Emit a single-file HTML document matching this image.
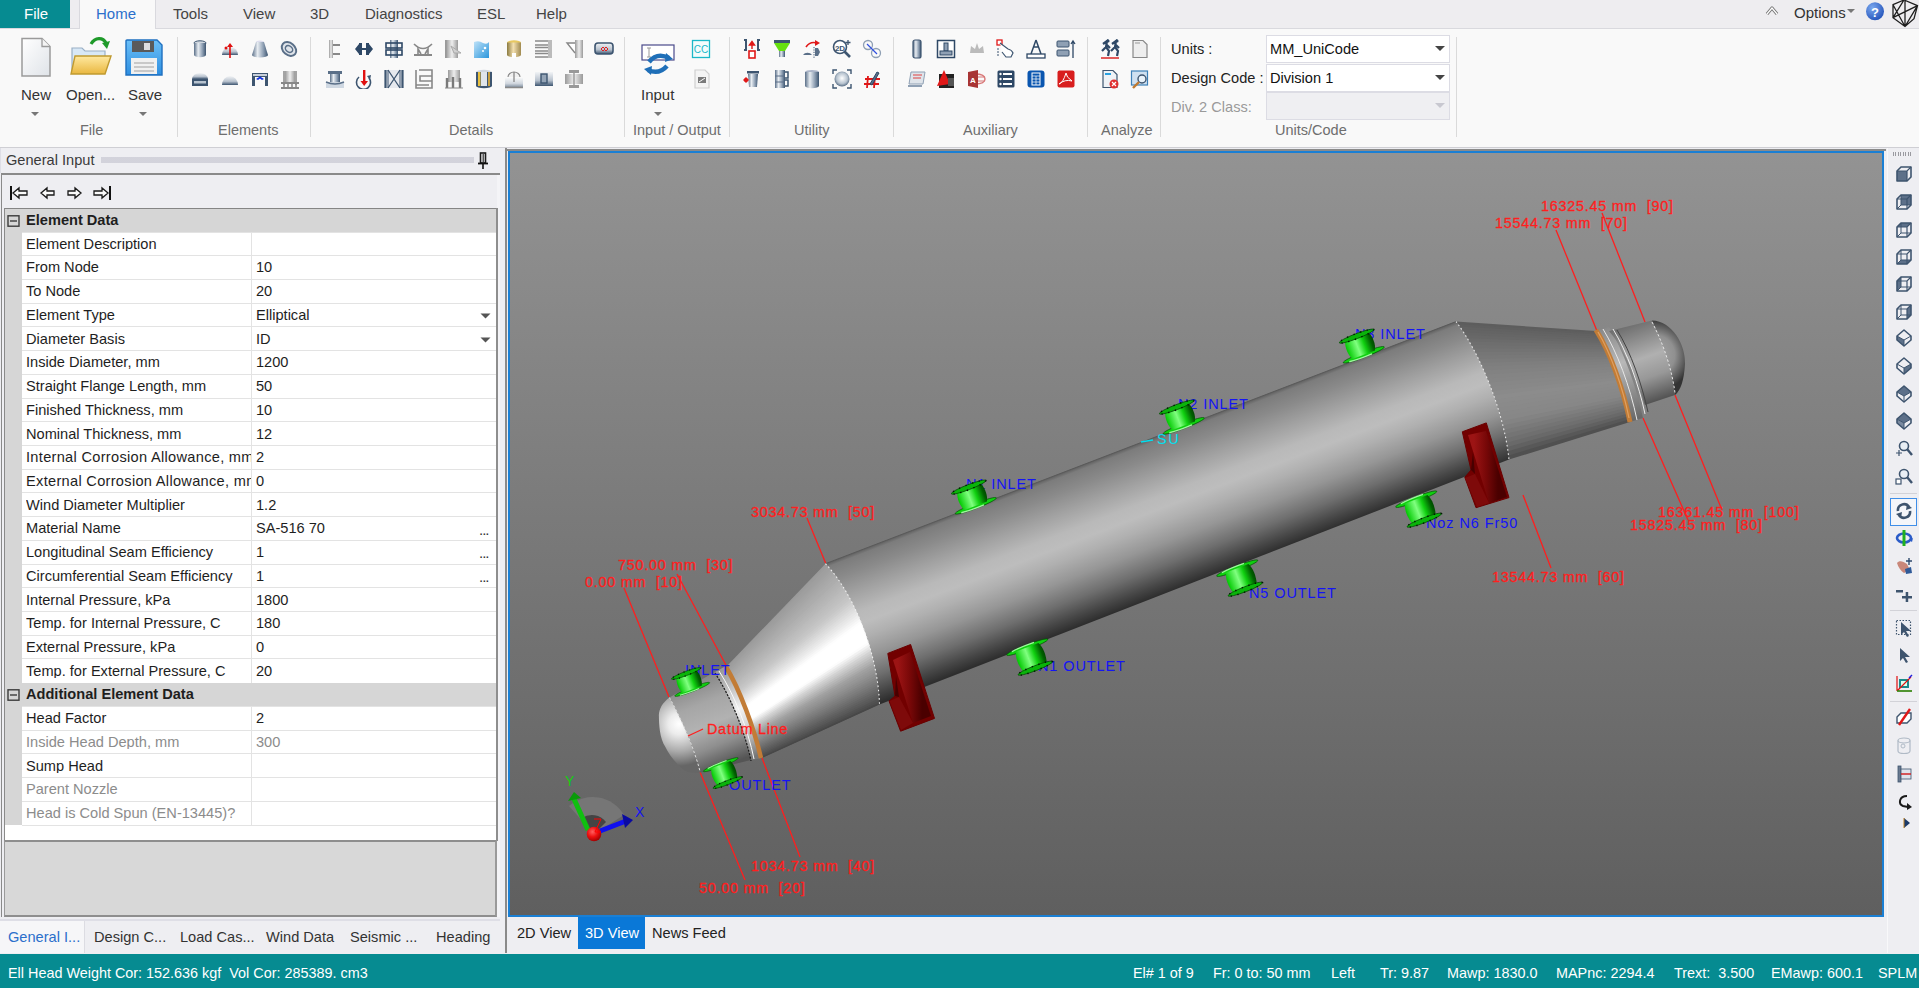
<!DOCTYPE html>
<html><head><meta charset="utf-8">
<style>
*{box-sizing:border-box;margin:0;padding:0}
html,body{width:1919px;height:988px;overflow:hidden;background:#eeeef2;font-family:"Liberation Sans",sans-serif;color:#333;position:relative}
.a{position:absolute}
.t{position:absolute;white-space:nowrap;line-height:1}
.tab{position:absolute;top:6px;font-size:15px;color:#444;line-height:1;white-space:nowrap}
.sep{position:absolute;top:37px;width:1px;height:100px;background:#dadada}
.glab{position:absolute;top:123px;font-size:14.5px;color:#6e6e6e;white-space:nowrap;line-height:1}
.lab{position:absolute;left:26px;width:225px;font-size:14.6px;color:#1e1e1e;white-space:nowrap;line-height:1;overflow:hidden}
.val{position:absolute;left:256px;font-size:14.6px;color:#1e1e1e;white-space:nowrap;line-height:1}
.g{color:#8c8c8c}
.st{position:absolute;top:966.2px;font-size:14.4px;color:#fff;white-space:nowrap;line-height:1}
.ic{position:absolute}

</style></head><body>
<div class="a" style="left:0;top:0;width:1919px;height:28px;background:#eeedf0"></div>
<div class="a" style="left:0;top:28px;width:1919px;height:119px;background:#f9f9f9"></div>
<div class="a" style="left:0;top:28px;width:1919px;height:1px;background:#d9d9de"></div>
<div class="a" style="left:0;top:0;width:70px;height:28px;background:#068b91"></div>
<div class="t" style="left:24px;top:5.5px;font-size:15px;color:#fff">File</div>
<div class="a" style="left:79px;top:0;width:77px;height:29px;background:#f9f9f9;border-left:1px solid #d9d9de;border-right:1px solid #d9d9de"></div>
<div class="tab" style="left:96px;color:#2b6fcb">Home</div>
<div class="tab" style="left:173px;color:#444">Tools</div>
<div class="tab" style="left:243px;color:#444">View</div>
<div class="tab" style="left:310px;color:#444">3D</div>
<div class="tab" style="left:365px;color:#444">Diagnostics</div>
<div class="tab" style="left:477px;color:#444">ESL</div>
<div class="tab" style="left:536px;color:#444">Help</div>
<div class="tab" style="left:1794px;color:#333;top:5px">Options</div>
<svg class="ic" style="left:1847px;top:9px" width="8" height="5"><path d="M0 0H8L4 4Z" fill="#777"/></svg>
<svg class="ic" style="left:1765px;top:5px" width="14" height="12"><path d="M2 9 L7 3 L12 9" fill="none" stroke="#777" stroke-width="3.2" stroke-linejoin="round"/><path d="M2 9 L7 3 L12 9" fill="none" stroke="#fff" stroke-width="1.2"/></svg>
<svg class="ic" style="left:1865px;top:1px" width="20" height="21"><defs><radialGradient id="hg" cx="0.35" cy="0.3" r="0.8"><stop offset="0" stop-color="#7aa7ee"/><stop offset="1" stop-color="#1f4fb8"/></radialGradient></defs><circle cx="10" cy="10.3" r="9" fill="url(#hg)"/><text x="10" y="15.5" font-size="13" font-weight="bold" text-anchor="middle" fill="#fff" font-family="Liberation Sans">?</text></svg>
<svg class="ic" style="left:1890px;top:0px" width="29" height="28" viewBox="1890 0 29 28"><path d="M1893 4.7 L1904 0 L1917.5 5.6 L1914 18.7 L1905 26.5 L1893 17.7 Z M1893 4.7 L1905 26.5 M1904 0 L1893 17.7 M1917.5 5.6 L1905 26.5 M1893 17.7 L1917.5 5.6 M1905 0 L1905 26" fill="none" stroke="#1e1e1e" stroke-width="1.3"/></svg>
<div class="sep" style="left:177px"></div>
<div class="sep" style="left:310px"></div>
<div class="sep" style="left:624px"></div>
<div class="sep" style="left:729px"></div>
<div class="sep" style="left:893px"></div>
<div class="sep" style="left:1087px"></div>
<div class="sep" style="left:1160px"></div>
<div class="sep" style="left:1456px"></div>
<div class="glab" style="left:80px">File</div>
<div class="glab" style="left:218px">Elements</div>
<div class="glab" style="left:449px">Details</div>
<div class="glab" style="left:633px">Input / Output</div>
<div class="glab" style="left:794px">Utility</div>
<div class="glab" style="left:963px">Auxiliary</div>
<div class="glab" style="left:1101px">Analyze</div>
<div class="glab" style="left:1275px">Units/Code</div>
<div class="t" style="left:21px;top:86.5px;font-size:15px;color:#333">New</div>
<div class="t" style="left:66px;top:86.5px;font-size:15px;color:#333">Open...</div>
<div class="t" style="left:128px;top:86.5px;font-size:15px;color:#333">Save</div>
<div class="t" style="left:641px;top:86.5px;font-size:15px;color:#333">Input</div>
<svg class="ic" style="left:31px;top:112px" width="8" height="5"><path d="M0 0H8L4 4Z" fill="#777"/></svg>
<svg class="ic" style="left:139px;top:112px" width="8" height="5"><path d="M0 0H8L4 4Z" fill="#777"/></svg>
<svg class="ic" style="left:654px;top:112px" width="8" height="5"><path d="M0 0H8L4 4Z" fill="#777"/></svg>
<div class="t" style="left:1171px;top:42px;font-size:14.6px;color:#222">Units :</div>
<div class="t" style="left:1171px;top:71px;font-size:14.6px;color:#222">Design Code :</div>
<div class="t" style="left:1171px;top:100px;font-size:14.6px;color:#9a9a9a">Div. 2 Class:</div>
<div class="a" style="left:1266px;top:35px;width:184px;height:28px;background:#fff;border:1px solid #dcdce4"></div>
<div class="t" style="left:1270px;top:42px;font-size:14.6px;color:#111">MM_UniCode</div>
<svg class="ic" style="left:1435px;top:46px" width="10" height="6"><path d="M0 0H10L5 5Z" fill="#444"/></svg>
<div class="a" style="left:1266px;top:64px;width:184px;height:28px;background:#fff;border:1px solid #dcdce4"></div>
<div class="t" style="left:1270px;top:71px;font-size:14.6px;color:#111">Division 1</div>
<svg class="ic" style="left:1435px;top:75px" width="10" height="6"><path d="M0 0H10L5 5Z" fill="#444"/></svg>
<div class="a" style="left:1266px;top:92px;width:184px;height:28px;background:#efeff2;border:1px solid #dcdce4"></div>
<svg class="ic" style="left:1435px;top:103px" width="10" height="6"><path d="M0 0H10L5 5Z" fill="#c8c8d0"/></svg>
<div class="a" style="left:0;top:147px;width:1919px;height:1px;background:#cfcfd4"></div>
<div class="a" style="left:500px;top:148px;width:6px;height:805px;background:#eeeef2"></div>
<div class="a" style="left:505px;top:148px;width:2px;height:805px;background:#8a8a8a"></div>
<div class="a" style="left:507px;top:149px;width:1379px;height:2px;background:#8a8a8a"></div>
<div class="a" style="left:508px;top:151px;width:1376px;height:766px;border:2px solid #1a7fd4"></div>
<div class="a" style="left:0;top:953.6px;width:1919px;height:35px;background:#068b91"></div>
<div class="st" style="left:8px">Ell Head Weight Cor: 152.636 kgf&nbsp; Vol Cor: 285389. cm3</div>
<div class="st" style="left:1133px">El# 1 of 9</div>
<div class="st" style="left:1213px">Fr: 0 to: 50 mm</div>
<div class="st" style="left:1331px">Left</div>
<div class="st" style="left:1380px">Tr: 9.87</div>
<div class="st" style="left:1447px">Mawp: 1830.0</div>
<div class="st" style="left:1556px">MAPnc: 2294.4</div>
<div class="st" style="left:1674px">Trext:&nbsp; 3.500</div>
<div class="st" style="left:1771px">EMawp: 600.1</div>
<div class="st" style="left:1878px">SPLM</div>
<div class="a" style="left:507px;top:917px;width:1379px;height:36px;background:#eeeef2"></div>
<div class="a" style="left:578px;top:917px;width:67px;height:32px;background:#0a78d7"></div>
<div class="t" style="left:517px;top:925.5px;font-size:14.6px;color:#222">2D View</div>
<div class="t" style="left:585px;top:925.5px;font-size:14.6px;color:#fff">3D View</div>
<div class="t" style="left:652px;top:925.5px;font-size:14.6px;color:#222">News Feed</div>
<div class="a" style="left:1886px;top:148px;width:33px;height:805px;background:#eeeef2"></div><svg class="ic" style="left:0;top:0" width="0" height="0"><defs><linearGradient id="mt" x1="0" x2="1"><stop offset="0" stop-color="#5a6f88"/><stop offset="0.35" stop-color="#e8edf2"/><stop offset="0.7" stop-color="#8fa0b4"/><stop offset="1" stop-color="#3d5570"/></linearGradient><linearGradient id="mv" x1="0" y1="0" x2="0" y2="1"><stop offset="0" stop-color="#f2f4f6"/><stop offset="0.6" stop-color="#b8c2ce"/><stop offset="1" stop-color="#3d5570"/></linearGradient><linearGradient id="gy" x1="0" x2="1"><stop offset="0" stop-color="#9a9a9a"/><stop offset="0.5" stop-color="#eeeeee"/><stop offset="1" stop-color="#9a9a9a"/></linearGradient><linearGradient id="gld" x1="0" x2="1"><stop offset="0" stop-color="#8a7a40"/><stop offset="0.45" stop-color="#f4e0b0"/><stop offset="1" stop-color="#a08a50"/></linearGradient><linearGradient id="wat" x1="0" y1="0" x2="1" y2="1"><stop offset="0" stop-color="#bfe2f8"/><stop offset="1" stop-color="#2a96dc"/></linearGradient><linearGradient id="fold" x1="0" y1="0" x2="0" y2="1"><stop offset="0" stop-color="#ffe9a0"/><stop offset="1" stop-color="#e9b740"/></linearGradient><linearGradient id="page" x1="0" y1="0" x2="1" y2="1"><stop offset="0" stop-color="#ffffff"/><stop offset="1" stop-color="#dfe3e8"/></linearGradient><linearGradient id="flp" x1="0" y1="0" x2="0" y2="1"><stop offset="0" stop-color="#6cc0f8"/><stop offset="1" stop-color="#2d8ee0"/></linearGradient><radialGradient id="sph" cx="0.5" cy="0.45" r="0.6"><stop offset="0" stop-color="#ffffff"/><stop offset="0.6" stop-color="#b8c4d0"/><stop offset="1" stop-color="#3d5570"/></radialGradient></defs></svg>
<svg class="ic" style="left:19px;top:37px" width="34" height="41" viewBox="0 0 34 41"><path d="M3 1.5 L23 1.5 L31 9.5 L31 39 L3 39 Z" fill="url(#page)" stroke="#9a9a9a" stroke-width="1.5"/><path d="M23 1.5 L23 9.5 L31 9.5" fill="#f4f4f4" stroke="#9a9a9a" stroke-width="1.3"/></svg>
<svg class="ic" style="left:69px;top:36px" width="44" height="41" viewBox="0 0 44 41"><path d="M3 12 L13 12 L16 15 L36 15 L36 36 L3 36 Z" fill="#d8e8f6" stroke="#9ab0c6" stroke-width="1.2"/><path d="M6 20 L42 20 L36 38 L2 38 Z" fill="url(#fold)" stroke="#c09a30" stroke-width="1.4"/><path d="M22 8 C26 1 34 1 37 7" fill="none" stroke="#1f9a2a" stroke-width="3.2"/><path d="M33 7 L41 5 L38 13 Z" fill="#1f9a2a"/></svg>
<svg class="ic" style="left:124px;top:38px" width="40" height="40" viewBox="0 0 40 40"><path d="M2 3 Q2 2 3 2 L33 2 L38 7 L38 37 L2 37 Z" fill="url(#flp)" stroke="#1f70c0" stroke-width="1.4"/><rect x="8" y="3" width="22" height="11" fill="#5a5a5a"/><rect x="20" y="5" width="6" height="7" fill="#ddd"/><rect x="7" y="20" width="26" height="16" fill="#f0f0f0"/><path d="M10 25 H30 M10 29 H30 M10 33 H30" stroke="#bbb" stroke-width="1.4"/></svg>
<svg class="ic" style="left:189.5px;top:39.0px" width="20" height="20" viewBox="0 0 20 20"><ellipse cx="10" cy="4" rx="6" ry="2.2" fill="#cfd6de" stroke="#3d5570"/><path d="M4 4 V16 A6 2.2 0 0 0 16 16 V4" fill="url(#mt)"/></svg>
<svg class="ic" style="left:219.5px;top:41.0px" width="20" height="20" viewBox="0 0 20 20"><path d="M2 14 A8 8 0 0 1 18 14 Z" fill="url(#mv)"/><path d="M10 17 V4" stroke="#e01010" stroke-width="1.6"/><path d="M7 6 L10 2 L13 6 Z" fill="#e01010"/><circle cx="6" cy="7" r="1.5" fill="#e01010"/></svg>
<svg class="ic" style="left:249.5px;top:39.0px" width="20" height="20" viewBox="0 0 20 20"><ellipse cx="10" cy="3" rx="4" ry="1.6" fill="#dde"/><path d="M6 3 L2 16 A8 2.5 0 0 0 18 16 L14 3 Z" fill="url(#mt)"/></svg>
<svg class="ic" style="left:279.0px;top:39.0px" width="20" height="20" viewBox="0 0 20 20"><ellipse cx="10" cy="10" rx="8" ry="6" transform="rotate(40 10 10)" fill="#dfe4ea" stroke="#5a6f88" stroke-width="2"/><ellipse cx="10" cy="10" rx="4" ry="3" transform="rotate(40 10 10)" fill="none" stroke="#5a6f88" stroke-width="1.5"/></svg>
<svg class="ic" style="left:189.5px;top:70.0px" width="20" height="20" viewBox="0 0 20 20"><path d="M2 9 A8 6 0 0 1 18 9 Z" fill="url(#mv)"/><rect x="2" y="9" width="16" height="7" fill="#3d5570"/><rect x="4" y="11" width="12" height="2.5" fill="#b8c4d0"/></svg>
<svg class="ic" style="left:219.5px;top:70.0px" width="20" height="20" viewBox="0 0 20 20"><path d="M2 15 A8 9 0 0 1 18 15 Z" fill="url(#mv)"/></svg>
<svg class="ic" style="left:249.5px;top:70.0px" width="20" height="20" viewBox="0 0 20 20"><path d="M2 3 H18 V16 H15 V7 H5 V16 H2 Z" fill="#3d5570"/><rect x="3" y="4" width="14" height="2" fill="#c8d0da"/><path d="M6 9 L10 6.5 L14 9 L12 10 L10 8.5 L8 10Z" fill="#1030e0"/></svg>
<svg class="ic" style="left:279.5px;top:70.0px" width="20" height="20" viewBox="0 0 20 20"><rect x="5" y="1" width="10" height="12" fill="url(#gy)"/><path d="M4 1 V15 M16 1 V15" stroke="#888" stroke-width="1.5"/><rect x="1" y="12" width="18" height="2" fill="#888"/><rect x="1" y="17" width="18" height="2" fill="#888"/><path d="M4 14 V17 M8 14 V17 M12 14 V17 M16 14 V17" stroke="#888" stroke-width="1.5"/></svg>
<svg class="ic" style="left:325.0px;top:39.0px" width="20" height="20" viewBox="0 0 20 20"><rect x="4" y="1" width="4" height="18" fill="url(#gy)"/><rect x="8" y="5" width="7" height="2" fill="#888"/><rect x="8" y="14" width="7" height="2" fill="#888"/></svg>
<svg class="ic" style="left:354.0px;top:39.0px" width="20" height="20" viewBox="0 0 20 20"><path d="M1 10 L5 5 V15 Z M19 10 L15 5 V15 Z" fill="#2e4866"/><rect x="5" y="4" width="3" height="12" fill="#2e4866"/><rect x="12" y="4" width="3" height="12" fill="#2e4866"/><rect x="8" y="9" width="4" height="2" fill="#2e4866"/></svg>
<svg class="ic" style="left:384.0px;top:39.0px" width="20" height="20" viewBox="0 0 20 20"><rect x="6" y="1" width="8" height="18" fill="url(#mt)"/><rect x="2" y="4" width="16" height="5" fill="none" stroke="#2e4866" stroke-width="1.6"/><rect x="2" y="11" width="16" height="5" fill="none" stroke="#2e4866" stroke-width="1.6"/></svg>
<svg class="ic" style="left:413.0px;top:39.0px" width="20" height="20" viewBox="0 0 20 20"><path d="M1 5 Q10 14 19 5" fill="none" stroke="#888" stroke-width="1.6"/><rect x="1" y="15" width="18" height="2" fill="#888"/><path d="M5 15 L5 10 L8 15 M15 15 L15 10 L12 15" fill="none" stroke="#888" stroke-width="1.6"/></svg>
<svg class="ic" style="left:443.0px;top:39.0px" width="20" height="20" viewBox="0 0 20 20"><rect x="3" y="1" width="12" height="18" fill="url(#gy)"/><rect x="2" y="1" width="1.5" height="18" fill="#999"/><path d="M8 7 L15 12 L18 14 L11 14 Z" fill="#d0d0d0" stroke="#aaa"/></svg>
<svg class="ic" style="left:473.0px;top:39.0px" width="20" height="20" viewBox="0 0 20 20"><path d="M1 3 Q6 1 10 4 Q14 6 16 3 V19 H1 Z" fill="url(#wat)"/><circle cx="12" cy="9" r="1.3" fill="#fff"/><circle cx="10" cy="12" r="1" fill="#fff"/></svg>
<svg class="ic" style="left:503.5px;top:39.0px" width="20" height="20" viewBox="0 0 20 20"><ellipse cx="10" cy="3.5" rx="7" ry="2.2" fill="#e8c860"/><path d="M3 3.5 V16 A7 2.2 0 0 0 17 16 V3.5" fill="url(#gld)"/><rect x="8" y="14" width="4" height="5" fill="#fff"/></svg>
<svg class="ic" style="left:533.5px;top:39.0px" width="20" height="20" viewBox="0 0 20 20"><path d="M1 2 H18 M1 6 H18 M1 8.5 H18 M1 12 H18 M1 14.5 H18 M1 18 H18" stroke="#8a8a8a" stroke-width="1.6"/><rect x="14" y="1" width="4" height="18" fill="#bbb"/></svg>
<svg class="ic" style="left:564.5px;top:39.0px" width="20" height="20" viewBox="0 0 20 20"><rect x="10" y="1" width="8" height="18" fill="url(#gy)"/><path d="M10 4 L2 4 L10 14" fill="#fff" stroke="#888" stroke-width="1.4"/></svg>
<svg class="ic" style="left:593.5px;top:39.0px" width="20" height="20" viewBox="0 0 20 20"><rect x="1" y="4" width="18" height="11" rx="3" fill="url(#mv)" stroke="#3d5570" stroke-width="1.6"/><path d="M7 10 L9 8 L11 10 L9 12Z M10 10 L12 8 L14 10 L12 12Z" fill="none" stroke="#e02020" stroke-width="1"/></svg>
<svg class="ic" style="left:325.0px;top:69.0px" width="20" height="20" viewBox="0 0 20 20"><rect x="1" y="13" width="18" height="6" fill="#cfd8e2"/><path d="M5 13 V4 H15 V13" fill="url(#mt)"/><rect x="3" y="2" width="14" height="3" fill="#5a6f88"/><path d="M1 13 Q10 17 19 13" fill="none" stroke="#5a6f88" stroke-width="1.5"/></svg>
<svg class="ic" style="left:354.0px;top:69.0px" width="20" height="20" viewBox="0 0 20 20"><path d="M5 8 A7 7 0 1 0 15 9" fill="none" stroke="#3d5570" stroke-width="1.6"/><path d="M13 7 L17 6 L16 11 Z" fill="#3d5570"/><rect x="9" y="1" width="2.4" height="12" fill="#e01010"/><path d="M6.5 12 L10.2 17 L14 12Z" fill="#e01010"/></svg>
<svg class="ic" style="left:384.0px;top:69.0px" width="20" height="20" viewBox="0 0 20 20"><rect x="1" y="1" width="18" height="18" fill="#e6e9ee"/><path d="M1.5 1 V19 M18.5 1 V19" stroke="#3d5570" stroke-width="2.2"/><path d="M4 1 V19 M16 1 V19" stroke="#3d5570" stroke-width="1"/><path d="M4 1 L16 19 M16 1 L4 19" stroke="#3d5570" stroke-width="1.3"/></svg>
<svg class="ic" style="left:414.0px;top:69.0px" width="20" height="20" viewBox="0 0 20 20"><path d="M2 1 V19 H18 V1 H5 M18 7 H6 V12 H18 M2 16 H15" fill="none" stroke="#888" stroke-width="1.6"/></svg>
<svg class="ic" style="left:443.5px;top:69.0px" width="20" height="20" viewBox="0 0 20 20"><rect x="4" y="1" width="12" height="12" fill="url(#gy)"/><path d="M3 19 V9 M9 19 V8 M16 19 V9" stroke="#7a7a7a" stroke-width="2.4"/><path d="M1 19 H19" stroke="#888" stroke-width="1"/></svg>
<svg class="ic" style="left:474.0px;top:69.0px" width="20" height="20" viewBox="0 0 20 20"><ellipse cx="10" cy="3" rx="8" ry="2.2" fill="#cfd6de"/><path d="M2 3 V17 A8 2.2 0 0 0 18 17 V3" fill="#3d5570"/><rect x="4" y="3" width="2.5" height="14" fill="#e8c040"/><rect x="7" y="3" width="6" height="14" fill="#dfe4ea"/><rect x="14" y="3" width="2" height="14" fill="#c8a040"/></svg>
<svg class="ic" style="left:504.0px;top:69.0px" width="20" height="20" viewBox="0 0 20 20"><path d="M4 8 A6 5 0 0 1 16 8" fill="#f0f0f0" stroke="#888" stroke-width="1.1"/><rect x="1" y="9" width="18" height="9" fill="url(#mv)" opacity="0.6"/><path d="M10 3 V13 M1 18.5 H19" stroke="#888" stroke-width="1.3"/></svg>
<svg class="ic" style="left:534.0px;top:69.0px" width="20" height="20" viewBox="0 0 20 20"><rect x="1" y="3" width="18" height="14" fill="url(#mv)"/><rect x="7" y="5" width="6" height="9" fill="#94a4b6" stroke="#3d5570" stroke-width="1.4"/></svg>
<svg class="ic" style="left:563.5px;top:69.0px" width="20" height="20" viewBox="0 0 20 20"><rect x="5" y="1" width="10" height="3" fill="#999"/><rect x="1" y="5" width="18" height="10" fill="url(#gy)"/><rect x="5" y="16" width="10" height="3" fill="#999"/><path d="M10 4 V16" stroke="#888" stroke-width="1.2"/></svg>
<svg class="ic" style="left:639px;top:42px" width="38" height="36" viewBox="0 0 38 36"><rect x="3" y="3" width="32" height="15" fill="#fff" stroke="#4a4a8a" stroke-width="1.2"/><path d="M8 6 H12 M10 6 V15 M8 15 H12" stroke="#999" stroke-width="1"/><path d="M10 20 Q18 10 30 16" fill="none" stroke="#1f6fb8" stroke-width="4.5"/><path d="M27 11 L34 17 L26 20Z" fill="#1f6fb8"/><path d="M28 24 Q20 33 9 28" fill="none" stroke="#1f6fb8" stroke-width="4.5"/><path d="M12 33 L5 27 L13 24Z" fill="#1f6fb8"/></svg>
<svg class="ic" style="left:691.0px;top:39.0px" width="20" height="20" viewBox="0 0 20 20"><rect x="1.5" y="1.5" width="17" height="17" fill="#f4fcfc" stroke="#1ab8c8" stroke-width="1.3"/><text x="10" y="14" font-size="10" text-anchor="middle" fill="#1ab8c8" font-family="Liberation Sans">CC</text></svg>
<svg class="ic" style="left:691.5px;top:69.0px" width="20" height="20" viewBox="0 0 20 20"><path d="M3 1 H13 L17 5 V19 H3 Z" fill="#f4f4f4" stroke="#cfcfcf" stroke-width="1.2"/><rect x="6" y="8" width="8" height="6" fill="#7a7a7a"/><path d="M7 13 L13 9" stroke="#fff" stroke-width="1"/></svg>
<svg class="ic" style="left:742.0px;top:39.0px" width="20" height="20" viewBox="0 0 20 20"><path d="M2 1 H4 V11 H2 M18 1 H16 V11 H18" stroke="#3d5570" stroke-width="2" fill="none"/><rect x="7" y="12" width="6" height="7" fill="#fff" stroke="#e01818" stroke-width="1.6"/><path d="M10 10 V4 M7.5 6 L10 2.5 L12.5 6Z" stroke="#e01818" fill="#e01818" stroke-width="1.4"/></svg>
<svg class="ic" style="left:772.0px;top:39.0px" width="20" height="20" viewBox="0 0 20 20"><rect x="2" y="1" width="16" height="3" fill="#3d5570"/><path d="M2 4 H18 L13 12 H7 Z" fill="#66e010"/><rect x="7" y="12" width="6" height="6" fill="url(#mt)"/></svg>
<svg class="ic" style="left:802.0px;top:39.0px" width="20" height="20" viewBox="0 0 20 20"><path d="M4 8 Q8 2 15 4" fill="none" stroke="#e01818" stroke-width="1.6"/><path d="M13 1 L18 4 L13 7Z" fill="#e01818"/><path d="M1 16 A5 4 0 0 1 10 16Z" fill="#5a6f88"/><path d="M12 8 V19" stroke="#3d5570" stroke-dasharray="1.2 1.2"/><path d="M13 9 H16 L18 13 L16 17 H13Z" fill="#5a6f88"/></svg>
<svg class="ic" style="left:832.0px;top:39.0px" width="20" height="20" viewBox="0 0 20 20"><circle cx="8" cy="8" r="6.5" fill="#fff" stroke="#3d5570" stroke-width="1.6"/><text x="8" y="11.5" font-size="8" text-anchor="middle" fill="#3d5570" font-weight="bold" font-family="Liberation Sans">2D</text><path d="M12.5 12.5 L18 18" stroke="#3d5570" stroke-width="2.6"/><path d="M16 1 V6 M13.5 3.5 H18.5" stroke="#3d5570" stroke-width="1.3"/></svg>
<svg class="ic" style="left:862.0px;top:39.0px" width="20" height="20" viewBox="0 0 20 20"><circle cx="6" cy="6" r="4.5" fill="none" stroke="#8fa0b4" stroke-width="1.3"/><circle cx="14" cy="14" r="4.5" fill="none" stroke="#8fa0b4" stroke-width="1.3"/><path d="M5 5 L15 15" stroke="#3050e0" stroke-width="1.3"/></svg>
<svg class="ic" style="left:742.0px;top:69.0px" width="20" height="20" viewBox="0 0 20 20"><rect x="5" y="2" width="12" height="2.5" fill="#3d5570"/><path d="M6 5 H16 L15 18 H7Z" fill="url(#mt)"/><circle cx="4" cy="11" r="2.2" fill="#e01818"/><path d="M1 11 H7 M4 8 V14" stroke="#e01818" stroke-width="0.9"/></svg>
<svg class="ic" style="left:772.0px;top:69.0px" width="20" height="20" viewBox="0 0 20 20"><rect x="3" y="1" width="10" height="18" fill="url(#mt)"/><path d="M13 3 H16 V9 H13 M13 11 H16 V17 H13" fill="none" stroke="#3d5570" stroke-width="1.5"/><path d="M3 7 H13 M3 13 H13" stroke="#5a6f88"/></svg>
<svg class="ic" style="left:802.0px;top:69.0px" width="20" height="20" viewBox="0 0 20 20"><ellipse cx="10" cy="3" rx="7" ry="2" fill="#aab4c8"/><path d="M3 3 V17 A7 2.2 0 0 0 17 17 V3" fill="url(#mt)"/></svg>
<svg class="ic" style="left:832.0px;top:69.0px" width="20" height="20" viewBox="0 0 20 20"><circle cx="10" cy="10" r="7.5" fill="url(#sph)"/><path d="M1 5 V1 H5 M15 1 H19 V5 M19 15 V19 H15 M5 19 H1 V15" fill="none" stroke="#3d5570" stroke-width="1.4"/></svg>
<svg class="ic" style="left:862.0px;top:69.0px" width="20" height="20" viewBox="0 0 20 20"><path d="M3 10 H18 M2 15 H17 M6 7 L5 19 M13 7 L12 19" stroke="#e01818" stroke-width="1.8"/><path d="M8 15 L15 3 L17 4 L10 16 Z" fill="#5a6f88" stroke="#2e4866"/></svg>
<svg class="ic" style="left:907.0px;top:39.0px" width="20" height="20" viewBox="0 0 20 20"><rect x="6" y="1" width="8" height="18" rx="2" fill="url(#mt)" stroke="#3d5570" stroke-width="1.2"/></svg>
<svg class="ic" style="left:936.0px;top:39.0px" width="20" height="20" viewBox="0 0 20 20"><rect x="1.5" y="1.5" width="17" height="17" fill="#fff" stroke="#2e4866" stroke-width="1.5"/><rect x="8" y="4" width="4" height="8" fill="#8fa0b4" stroke="#2e4866"/><rect x="4" y="12" width="12" height="4" fill="#8fa0b4" stroke="#2e4866"/></svg>
<svg class="ic" style="left:966.5px;top:39.0px" width="20" height="20" viewBox="0 0 20 20"><path d="M3 14 L4 7 L8 10 L10 4 L12 10 L16 7 L17 14 Z" fill="#bbb"/></svg>
<svg class="ic" style="left:995.5px;top:39.0px" width="20" height="20" viewBox="0 0 20 20"><rect x="1" y="1" width="5" height="5" fill="#fff" stroke="#e01818" stroke-width="1.3"/><path d="M4 4 L12 10 Q16 11 17 14 L15 18 H10 L6 13" fill="#fff" stroke="#3d5570" stroke-width="1.2"/><path d="M1 10 H3 M1 13 H3 M1 16 H3" stroke="#3d5570"/></svg>
<svg class="ic" style="left:1026.0px;top:39.0px" width="20" height="20" viewBox="0 0 20 20"><path d="M10 1 L5 15 M10 1 L15 15 M7 8 H13" stroke="#2e4866" stroke-width="1.5" fill="none"/><rect x="1" y="15" width="18" height="4" fill="#fff" stroke="#2e4866" stroke-width="1.3"/></svg>
<svg class="ic" style="left:1056.0px;top:39.0px" width="20" height="20" viewBox="0 0 20 20"><rect x="1" y="2" width="12" height="6" rx="1" fill="#8fa0b4" stroke="#3d5570"/><rect x="1" y="11" width="12" height="6" rx="1" fill="#8fa0b4" stroke="#3d5570"/><path d="M17 19 V3 M15 5 L17 2 L19 5" stroke="#2e4866" stroke-width="1.3" fill="none"/></svg>
<svg class="ic" style="left:907.0px;top:69.0px" width="20" height="20" viewBox="0 0 20 20"><path d="M4 3 H18 L16 15 H2 Z" fill="#dfe4ea" stroke="#8fa0b4"/><path d="M6 6 H15 M6 9 H14" stroke="#e04040" stroke-width="1.2"/><path d="M1 17 H15" stroke="#8fa0b4" stroke-width="2"/></svg>
<svg class="ic" style="left:936.0px;top:69.0px" width="20" height="20" viewBox="0 0 20 20"><rect x="3" y="5" width="15" height="14" fill="#222"/><path d="M1 17 L8 1 L14 15Z" fill="#e01818"/><rect x="12" y="9" width="6" height="8" fill="#555"/></svg>
<svg class="ic" style="left:966.5px;top:69.0px" width="20" height="20" viewBox="0 0 20 20"><path d="M8 5 Q18 5 18 10 Q18 15 8 15" fill="none" stroke="#d87878" stroke-width="1.4"/><path d="M8 8 H18 M8 12 H18" stroke="#d87878" stroke-width="1.1"/><path d="M1 3 L11 1 V19 L1 17 Z" fill="#a83434"/><text x="6" y="14" font-size="8" text-anchor="middle" fill="#fff" font-weight="bold" font-family="Liberation Sans">A</text></svg>
<svg class="ic" style="left:995.5px;top:69.0px" width="20" height="20" viewBox="0 0 20 20"><rect x="1.5" y="1.5" width="17" height="17" rx="1.5" fill="#2e4866"/><path d="M7 5 H16 M7 10 H16 M7 15 H16" stroke="#fff" stroke-width="1.8"/><circle cx="4.5" cy="5" r="1.2" fill="#fff"/><circle cx="4.5" cy="10" r="1.2" fill="#fff"/><circle cx="4.5" cy="15" r="1.2" fill="#fff"/></svg>
<svg class="ic" style="left:1026.0px;top:69.0px" width="20" height="20" viewBox="0 0 20 20"><rect x="1.5" y="1.5" width="17" height="17" rx="3" fill="#0a56b0"/><rect x="6" y="4" width="8" height="12" fill="none" stroke="#fff" stroke-width="1"/><path d="M6 7 H14 M6 10 H14 M6 13 H14 M10 7 V16" stroke="#fff" stroke-width="0.7"/></svg>
<svg class="ic" style="left:1056.0px;top:69.0px" width="20" height="20" viewBox="0 0 20 20"><rect x="1.5" y="1.5" width="17" height="17" rx="2" fill="#d81e1e"/><path d="M10 4 Q7 14 3 15 Q9 10 16 12 Q10 8 10 4Z" fill="none" stroke="#fff" stroke-width="1"/></svg>
<svg class="ic" style="left:1100.0px;top:39.0px" width="20" height="20" viewBox="0 0 20 20"><path d="M3 5 L7 2 L6 8 L9 12 L8 17 M6 8 L2 12 M7 6 L10 9 M12 5 L16 2 L15 8 L18 12 L17 17 M15 8 L11 12 M16 6 L19 9" fill="none" stroke="#2e4866" stroke-width="2.2"/><circle cx="8" cy="2" r="1.6" fill="#2e4866"/><circle cx="17" cy="2" r="1.6" fill="#2e4866"/><path d="M1 19 H19" stroke="#d81818" stroke-width="1.4"/></svg>
<svg class="ic" style="left:1130.0px;top:39.0px" width="20" height="20" viewBox="0 0 20 20"><path d="M3 1.5 H13 L17 5.5 V18.5 H3 Z" fill="#eee" stroke="#888" stroke-width="1.2"/><path d="M5 4 H10" stroke="#999"/></svg>
<svg class="ic" style="left:1100.0px;top:69.0px" width="20" height="20" viewBox="0 0 20 20"><path d="M3 1.5 H13 L17 5.5 V18.5 H3 Z" fill="#eef2f6" stroke="#3d5570" stroke-width="1.2"/><rect x="5" y="4" width="6" height="2" fill="#2aa0e0"/><circle cx="14" cy="15" r="4.5" fill="#e03030"/><path d="M12 13 L16 17 M16 13 L12 17" stroke="#fff" stroke-width="1.2"/></svg>
<svg class="ic" style="left:1130.0px;top:69.0px" width="20" height="20" viewBox="0 0 20 20"><rect x="1.5" y="2" width="16" height="14" fill="#cfe0f0" stroke="#3d80b8" stroke-width="1.2"/><circle cx="12" cy="10" r="4" fill="#e8f2fa" stroke="#3d5570" stroke-width="1.4"/><path d="M9 13 L3 19" stroke="#c07a30" stroke-width="2.4"/></svg><div class="a" style="left:0;top:148px;width:500px;height:25px;background:#eeeef2;border-left:1px solid #dedee6"></div>
<div class="t" style="left:6px;top:152.5px;font-size:14.6px;color:#3a3a3a">General Input</div>
<div class="a" style="left:101px;top:157px;width:373px;height:6px;background-image:radial-gradient(circle at 1px 1px,#d2d2da 0.7px,transparent 0.9px);background-size:2px 2px"></div>
<svg class="ic" style="left:476px;top:152px" width="14" height="18" viewBox="0 0 14 18"><rect x="4.5" y="1" width="5" height="10" fill="none" stroke="#1a1a1a" stroke-width="1.6"/><rect x="6.5" y="2" width="1.5" height="8" fill="#555"/><line x1="2" y1="11.5" x2="12" y2="11.5" stroke="#111" stroke-width="1.8"/><line x1="7" y1="12" x2="7" y2="17" stroke="#111" stroke-width="1.6"/></svg>
<div class="a" style="left:1px;top:173px;width:499px;height:2px;background:#8a8a8a"></div>
<div class="a" style="left:1px;top:173px;width:1px;height:744px;background:#8a8a8a"></div>
<div class="a" style="left:497px;top:175px;width:3px;height:742px;background:#f4f4f7"></div>
<svg class="ic" style="left:10px;top:185px" width="19" height="16" viewBox="0 0 19 16"><path d="M3 8 L9 3 L9 6 L17 6 L17 10 L9 10 L9 13 Z" fill="#fafafa" stroke="#1a1a1a" stroke-width="1.3"/><line x1="1" y1="1" x2="1" y2="15" stroke="#111" stroke-width="2"/></svg>
<svg class="ic" style="left:39px;top:185px" width="19" height="16" viewBox="0 0 19 16"><path d="M2 8 L8 3 L8 6 L15 6 L15 10 L8 10 L8 13 Z" fill="#fafafa" stroke="#1a1a1a" stroke-width="1.3" stroke-linejoin="miter"/></svg>
<svg class="ic" style="left:66px;top:185px" width="19" height="16" viewBox="0 0 19 16"><path d="M15 8 L9 3 L9 6 L2 6 L2 10 L9 10 L9 13 Z" fill="#fafafa" stroke="#1a1a1a" stroke-width="1.3"/></svg>
<svg class="ic" style="left:93px;top:185px" width="19" height="16" viewBox="0 0 19 16"><path d="M15 8 L9 3 L9 6 L1 6 L1 10 L9 10 L9 13 Z" fill="#fafafa" stroke="#1a1a1a" stroke-width="1.3"/><line x1="17" y1="1" x2="17" y2="15" stroke="#111" stroke-width="2"/></svg>
<div class="a" style="left:5px;top:209px;width:492px;height:632px;background:#fff"></div>
<div class="a" style="left:5px;top:209px;width:17px;height:616.02px;background:#d6d6d6"></div>
<div class="a" style="left:5px;top:208.30px;width:491px;height:23.72px;background:#d6d6d6"></div>
<svg class="ic" style="left:7px;top:214.80px" width="13" height="12" viewBox="0 0 13 12"><rect x="1" y="0.8" width="11" height="10.4" fill="none" stroke="#3c3c3c" stroke-width="1.4"/><line x1="3" y1="6" x2="10" y2="6" stroke="#3c3c3c" stroke-width="1.4"/></svg>
<div class="t" style="left:26px;top:213.05px;font-size:14.6px;font-weight:bold;color:#1e1e1e">Element Data</div>
<div class="a" style="left:22px;top:231.52px;width:474px;height:1px;background:#e3e3e3"></div>
<div class="lab" style="top:236.77px">Element Description</div>
<div class="a" style="left:22px;top:255.24px;width:474px;height:1px;background:#e3e3e3"></div>
<div class="lab" style="top:260.49px">From Node</div>
<div class="val" style="top:260.49px">10</div>
<div class="a" style="left:22px;top:278.96px;width:474px;height:1px;background:#e3e3e3"></div>
<div class="lab" style="top:284.21px">To Node</div>
<div class="val" style="top:284.21px">20</div>
<div class="a" style="left:22px;top:302.68px;width:474px;height:1px;background:#e3e3e3"></div>
<div class="lab" style="top:307.93px">Element Type</div>
<div class="val" style="top:307.93px">Elliptical</div>
<svg class="ic" style="left:480px;top:313.18px" width="11" height="6" viewBox="0 0 11 6"><path d="M0.5 0.5 L10.5 0.5 L5.5 5.5 Z" fill="#555"/></svg>
<div class="a" style="left:22px;top:326.40px;width:474px;height:1px;background:#e3e3e3"></div>
<div class="lab" style="top:331.65px">Diameter Basis</div>
<div class="val" style="top:331.65px">ID</div>
<svg class="ic" style="left:480px;top:336.90px" width="11" height="6" viewBox="0 0 11 6"><path d="M0.5 0.5 L10.5 0.5 L5.5 5.5 Z" fill="#555"/></svg>
<div class="a" style="left:22px;top:350.12px;width:474px;height:1px;background:#e3e3e3"></div>
<div class="lab" style="top:355.37px">Inside Diameter, mm</div>
<div class="val" style="top:355.37px">1200</div>
<div class="a" style="left:22px;top:373.84px;width:474px;height:1px;background:#e3e3e3"></div>
<div class="lab" style="top:379.09px">Straight Flange Length, mm</div>
<div class="val" style="top:379.09px">50</div>
<div class="a" style="left:22px;top:397.56px;width:474px;height:1px;background:#e3e3e3"></div>
<div class="lab" style="top:402.81px">Finished Thickness, mm</div>
<div class="val" style="top:402.81px">10</div>
<div class="a" style="left:22px;top:421.28px;width:474px;height:1px;background:#e3e3e3"></div>
<div class="lab" style="top:426.53px">Nominal Thickness, mm</div>
<div class="val" style="top:426.53px">12</div>
<div class="a" style="left:22px;top:445.00px;width:474px;height:1px;background:#e3e3e3"></div>
<div class="lab" style="top:450.25px;letter-spacing:0.3px">Internal Corrosion Allowance, mm</div>
<div class="val" style="top:450.25px">2</div>
<div class="a" style="left:22px;top:468.72px;width:474px;height:1px;background:#e3e3e3"></div>
<div class="lab" style="top:473.97px;letter-spacing:0.3px">External Corrosion Allowance, mm</div>
<div class="val" style="top:473.97px">0</div>
<div class="a" style="left:22px;top:492.44px;width:474px;height:1px;background:#e3e3e3"></div>
<div class="lab" style="top:497.69px">Wind Diameter Multiplier</div>
<div class="val" style="top:497.69px">1.2</div>
<div class="a" style="left:22px;top:516.16px;width:474px;height:1px;background:#e3e3e3"></div>
<div class="lab" style="top:521.41px">Material Name</div>
<div class="val" style="top:521.41px">SA-516 70</div>
<div class="t" style="left:479px;top:521.66px;font-size:15px;color:#333;letter-spacing:-1px">...</div>
<div class="a" style="left:22px;top:539.88px;width:474px;height:1px;background:#e3e3e3"></div>
<div class="lab" style="top:545.13px">Longitudinal Seam Efficiency</div>
<div class="val" style="top:545.13px">1</div>
<div class="t" style="left:479px;top:545.38px;font-size:15px;color:#333;letter-spacing:-1px">...</div>
<div class="a" style="left:22px;top:563.60px;width:474px;height:1px;background:#e3e3e3"></div>
<div class="lab" style="top:568.85px">Circumferential Seam Efficiency</div>
<div class="val" style="top:568.85px">1</div>
<div class="t" style="left:479px;top:569.10px;font-size:15px;color:#333;letter-spacing:-1px">...</div>
<div class="a" style="left:22px;top:587.32px;width:474px;height:1px;background:#e3e3e3"></div>
<div class="lab" style="top:592.57px">Internal Pressure, kPa</div>
<div class="val" style="top:592.57px">1800</div>
<div class="a" style="left:22px;top:611.04px;width:474px;height:1px;background:#e3e3e3"></div>
<div class="lab" style="top:616.29px">Temp. for Internal Pressure, C</div>
<div class="val" style="top:616.29px">180</div>
<div class="a" style="left:22px;top:634.76px;width:474px;height:1px;background:#e3e3e3"></div>
<div class="lab" style="top:640.01px">External Pressure, kPa</div>
<div class="val" style="top:640.01px">0</div>
<div class="a" style="left:22px;top:658.48px;width:474px;height:1px;background:#e3e3e3"></div>
<div class="lab" style="top:663.73px">Temp. for External Pressure, C</div>
<div class="val" style="top:663.73px">20</div>
<div class="a" style="left:5px;top:682.70px;width:491px;height:23.72px;background:#d6d6d6"></div>
<svg class="ic" style="left:7px;top:689.20px" width="13" height="12" viewBox="0 0 13 12"><rect x="1" y="0.8" width="11" height="10.4" fill="none" stroke="#3c3c3c" stroke-width="1.4"/><line x1="3" y1="6" x2="10" y2="6" stroke="#3c3c3c" stroke-width="1.4"/></svg>
<div class="t" style="left:26px;top:687.45px;font-size:14.6px;font-weight:bold;color:#1e1e1e">Additional Element Data</div>
<div class="a" style="left:22px;top:705.92px;width:474px;height:1px;background:#e3e3e3"></div>
<div class="lab" style="top:711.17px">Head Factor</div>
<div class="val" style="top:711.17px">2</div>
<div class="a" style="left:22px;top:729.64px;width:474px;height:1px;background:#e3e3e3"></div>
<div class="lab g" style="top:734.89px">Inside Head Depth, mm</div>
<div class="val g" style="top:734.89px">300</div>
<div class="a" style="left:22px;top:753.36px;width:474px;height:1px;background:#e3e3e3"></div>
<div class="lab" style="top:758.61px">Sump Head</div>
<div class="a" style="left:22px;top:777.08px;width:474px;height:1px;background:#e3e3e3"></div>
<div class="lab g" style="top:782.33px">Parent Nozzle</div>
<div class="a" style="left:22px;top:800.80px;width:474px;height:1px;background:#e3e3e3"></div>
<div class="lab g" style="top:806.05px">Head is Cold Spun (EN-13445)?</div>
<div class="a" style="left:22px;top:824.52px;width:474px;height:1px;background:#e3e3e3"></div>
<div class="a" style="left:251px;top:232.02px;width:1px;height:450.68px;background:#e3e3e3"></div>
<div class="a" style="left:251px;top:706.42px;width:1px;height:118.60px;background:#e3e3e3"></div>
<div class="a" style="left:4px;top:208px;width:493px;height:1.3px;background:#858585"></div>
<div class="a" style="left:4px;top:208px;width:1.2px;height:633px;background:#8a8a8a"></div>
<div class="a" style="left:496px;top:208px;width:1.5px;height:633px;background:#8e8e8e"></div>
<div class="a" style="left:4px;top:840px;width:493px;height:77px;background:#d8d8d8;border-top:2px solid #8e8e8e;border-left:1px solid #9a9a9a;border-right:2px solid #9a9a9a;border-bottom:2px solid #8e8e8e"></div>
<div class="a" style="left:0;top:919px;width:500px;height:2px;background:#dedee6"></div>
<div class="a" style="left:0;top:921px;width:85px;height:32px;background:#f6f6f8;border-right:1px solid #dcdce2"></div>
<div class="t" style="left:8px;top:929.5px;font-size:14.6px;color:#2b6fcb">General I...</div>
<div class="t" style="left:94px;top:929.5px;font-size:14.6px;color:#333">Design C...</div>
<div class="t" style="left:180px;top:929.5px;font-size:14.6px;color:#333">Load Cas...</div>
<div class="t" style="left:266px;top:929.5px;font-size:14.6px;color:#333">Wind Data</div>
<div class="t" style="left:350px;top:929.5px;font-size:14.6px;color:#333">Seismic ...</div>
<div class="t" style="left:436px;top:929.5px;font-size:14.6px;color:#333">Heading</div><div class="a" style="left:510px;top:153px;width:1372px;height:762px;background:linear-gradient(#939393,#5f5f5f)"></div>
<svg class="ic" style="left:510px;top:153px" width="1372" height="762" viewBox="510 153 1372 762" font-family="Liberation Sans"><defs><linearGradient id="gcyl" gradientUnits="userSpaceOnUse" x1="1140.75" y1="442.65" x2="1194.25" y2="582.05"><stop offset="0" stop-color="#606060"/><stop offset="0.025" stop-color="#7c7c7c"/><stop offset="0.12" stop-color="#8a8a8a"/><stop offset="0.25" stop-color="#a2a2a2"/><stop offset="0.38" stop-color="#b9b9b9"/><stop offset="0.46" stop-color="#bdbdbd"/><stop offset="0.55" stop-color="#b0b0b0"/><stop offset="0.68" stop-color="#969696"/><stop offset="0.82" stop-color="#6e6e6e"/><stop offset="0.93" stop-color="#464646"/><stop offset="1" stop-color="#2e2e2e"/></linearGradient><linearGradient id="gcone" gradientUnits="userSpaceOnUse" x1="770" y1="612" x2="822" y2="733"><stop offset="0" stop-color="#8a8a8a"/><stop offset="0.2" stop-color="#b4b4b4"/><stop offset="0.42" stop-color="#eeeeee"/><stop offset="0.55" stop-color="#ffffff"/><stop offset="0.68" stop-color="#d8d8d8"/><stop offset="0.85" stop-color="#8e8e8e"/><stop offset="1" stop-color="#505050"/></linearGradient><linearGradient id="gsmall" gradientUnits="userSpaceOnUse" x1="692" y1="684" x2="725" y2="766"><stop offset="0" stop-color="#8a8a8a"/><stop offset="0.25" stop-color="#a6a6a6"/><stop offset="0.5" stop-color="#b2b2b2"/><stop offset="0.75" stop-color="#8e8e8e"/><stop offset="1" stop-color="#555555"/></linearGradient><linearGradient id="gring" gradientUnits="userSpaceOnUse" x1="712" y1="675" x2="745" y2="760"><stop offset="0" stop-color="#9a9a9a"/><stop offset="0.45" stop-color="#f2f2f2"/><stop offset="0.7" stop-color="#cfcfcf"/><stop offset="1" stop-color="#777"/></linearGradient><radialGradient id="ghead" gradientUnits="userSpaceOnUse" cx="679" cy="724" r="42"><stop offset="0" stop-color="#ffffff"/><stop offset="0.25" stop-color="#ececec"/><stop offset="0.65" stop-color="#ababab"/><stop offset="1" stop-color="#666"/></radialGradient><linearGradient id="grcone" gradientUnits="userSpaceOnUse" x1="1520" y1="330" x2="1565" y2="445"><stop offset="0" stop-color="#626262"/><stop offset="0.1" stop-color="#777"/><stop offset="0.5" stop-color="#8e8e8e"/><stop offset="0.8" stop-color="#7a7a7a"/><stop offset="1" stop-color="#4e4e4e"/></linearGradient><linearGradient id="grring" gradientUnits="userSpaceOnUse" x1="1600" y1="330" x2="1632" y2="420"><stop offset="0" stop-color="#8a8a8a"/><stop offset="0.4" stop-color="#b8b8b8"/><stop offset="1" stop-color="#6a6a6a"/></linearGradient><linearGradient id="grsmall" gradientUnits="userSpaceOnUse" x1="1625" y1="326" x2="1652" y2="402"><stop offset="0" stop-color="#6e6e6e"/><stop offset="0.45" stop-color="#b0b0b0"/><stop offset="0.7" stop-color="#989898"/><stop offset="1" stop-color="#555"/></linearGradient><radialGradient id="grhead" gradientUnits="userSpaceOnUse" cx="1655" cy="355" r="36"><stop offset="0" stop-color="#a8a8a8"/><stop offset="0.55" stop-color="#909090"/><stop offset="0.85" stop-color="#555"/><stop offset="1" stop-color="#333"/></radialGradient><linearGradient id="gnz" x1="0" y1="0" x2="1" y2="0"><stop offset="0" stop-color="#00c800"/><stop offset="0.4" stop-color="#80ff80"/><stop offset="0.65" stop-color="#10d010"/><stop offset="0.9" stop-color="#006000"/><stop offset="1" stop-color="#004a00"/></linearGradient><linearGradient id="gsad" gradientUnits="userSpaceOnUse" x1="898" y1="680" x2="922" y2="680"><stop offset="0" stop-color="#9c1414"/><stop offset="0.5" stop-color="#780808"/><stop offset="1" stop-color="#4a0000"/></linearGradient><linearGradient id="gsad2" gradientUnits="userSpaceOnUse" x1="1474" y1="460" x2="1498" y2="460"><stop offset="0" stop-color="#9c1414"/><stop offset="0.5" stop-color="#780808"/><stop offset="1" stop-color="#4a0000"/></linearGradient><radialGradient id="gball" cx="0.4" cy="0.35" r="0.7"><stop offset="0" stop-color="#ff6060"/><stop offset="0.5" stop-color="#ee1010"/><stop offset="1" stop-color="#900"/></radialGradient></defs><line x1="1602" y1="213" x2="1645" y2="322" stroke="#ff1e1e" stroke-width="1.3"/><line x1="1556" y1="230" x2="1597" y2="331" stroke="#ff1e1e" stroke-width="1.3"/><line x1="1675" y1="395" x2="1722" y2="510" stroke="#ff1e1e" stroke-width="1.3"/><line x1="1643" y1="418" x2="1688" y2="520" stroke="#ff1e1e" stroke-width="1.3"/><line x1="1523" y1="495" x2="1551" y2="568" stroke="#ff1e1e" stroke-width="1.3"/><line x1="807" y1="518" x2="826" y2="564" stroke="#ff1e1e" stroke-width="1.3"/><line x1="677" y1="574" x2="727" y2="667" stroke="#ff1e1e" stroke-width="1.3"/><line x1="624" y1="588" x2="669" y2="697" stroke="#ff1e1e" stroke-width="1.3"/><line x1="762" y1="758" x2="800" y2="857" stroke="#ff1e1e" stroke-width="1.3"/><line x1="700" y1="772" x2="745" y2="880" stroke="#ff1e1e" stroke-width="1.3"/><path d="M1456.0 321.6L1458.6 325.1L1597.7 333.6L1596.0 331.0Z" fill="#5d5d5d"/><path d="M1457.8 324.0L1460.5 327.8L1598.8 335.5L1597.2 332.8Z" fill="#5f5f5f"/><path d="M1459.7 326.6L1462.4 330.5L1600.0 337.4L1598.3 334.6Z" fill="#626262"/><path d="M1461.6 329.3L1464.3 333.4L1601.1 339.4L1599.5 336.6Z" fill="#646464"/><path d="M1463.4 332.2L1466.1 336.5L1602.3 341.5L1600.6 338.5Z" fill="#666666"/><path d="M1465.3 335.1L1468.0 339.6L1603.4 343.6L1601.8 340.6Z" fill="#686868"/><path d="M1467.2 338.2L1469.9 342.9L1604.5 345.8L1602.9 342.7Z" fill="#6b6b6b"/><path d="M1469.1 341.4L1471.8 346.2L1605.6 348.0L1604.0 344.8Z" fill="#6e6e6e"/><path d="M1471.0 344.8L1473.7 349.7L1606.7 350.3L1605.1 347.0Z" fill="#707070"/><path d="M1472.9 348.2L1475.5 353.2L1607.8 352.6L1606.2 349.3Z" fill="#737373"/><path d="M1474.7 351.7L1477.4 356.9L1608.9 355.0L1607.3 351.6Z" fill="#767676"/><path d="M1476.6 355.3L1479.2 360.6L1609.9 357.4L1608.4 354.0Z" fill="#787878"/><path d="M1478.4 359.0L1481.0 364.4L1611.0 359.9L1609.5 356.4Z" fill="#7b7b7b"/><path d="M1480.2 362.8L1482.8 368.3L1612.0 362.4L1610.5 358.8Z" fill="#7e7e7e"/><path d="M1482.0 366.6L1484.5 372.2L1613.1 364.9L1611.6 361.3Z" fill="#808080"/><path d="M1483.8 370.5L1486.2 376.2L1614.1 367.5L1612.6 363.8Z" fill="#828282"/><path d="M1485.5 374.5L1487.9 380.3L1615.1 370.1L1613.6 366.4Z" fill="#848484"/><path d="M1487.2 378.6L1489.6 384.4L1616.0 372.8L1614.6 369.0Z" fill="#858585"/><path d="M1488.9 382.6L1491.2 388.6L1617.0 375.4L1615.6 371.6Z" fill="#878787"/><path d="M1490.5 386.8L1492.8 392.8L1618.0 378.1L1616.6 374.3Z" fill="#888888"/><path d="M1492.1 391.0L1494.3 397.1L1618.9 380.9L1617.6 377.0Z" fill="#8a8a8a"/><path d="M1493.6 395.2L1495.7 401.3L1619.8 383.6L1618.5 379.7Z" fill="#8c8c8c"/><path d="M1495.1 399.5L1497.1 405.6L1620.7 386.4L1619.4 382.4Z" fill="#8b8b8b"/><path d="M1496.5 403.8L1498.5 410.0L1621.6 389.2L1620.3 385.2Z" fill="#8a8a8a"/><path d="M1497.9 408.1L1499.8 414.3L1622.4 392.0L1621.2 388.0Z" fill="#898989"/><path d="M1499.2 412.4L1501.0 418.6L1623.2 394.8L1622.0 390.8Z" fill="#888888"/><path d="M1500.5 416.8L1502.2 423.0L1624.0 397.6L1622.9 393.6Z" fill="#878787"/><path d="M1501.7 421.1L1503.3 427.3L1624.8 400.5L1623.7 396.4Z" fill="#838383"/><path d="M1502.8 425.5L1504.3 431.7L1625.6 403.3L1624.5 399.2Z" fill="#7e7e7e"/><path d="M1503.9 429.8L1505.3 436.0L1626.3 406.1L1625.3 402.1Z" fill="#797979"/><path d="M1504.9 434.1L1506.1 440.3L1627.1 409.0L1626.0 404.9Z" fill="#747474"/><path d="M1505.8 438.4L1506.9 444.6L1627.7 411.8L1626.7 407.8Z" fill="#6f6f6f"/><path d="M1506.6 442.7L1507.6 448.8L1628.4 414.7L1627.5 410.6Z" fill="#696969"/><path d="M1507.3 447.0L1508.2 453.1L1629.1 417.5L1628.1 413.5Z" fill="#616161"/><path d="M1508.0 451.2L1508.7 457.2L1629.7 420.4L1628.8 416.3Z" fill="#585858"/><path d="M1508.5 455.4L1509.0 459.6L1630.0 422.0L1629.4 419.2Z" fill="#505050"/><path d="M1596 331 L1609 327 C1623 350 1636 385 1643 418 L1630 422 C1623 390 1611 355 1596 331 Z" fill="url(#grring)"/><path d="M1609 331 L1652 320.5 C1664 345 1672 370 1675 395 L1645 405 C1638 380 1625 350 1609 331 Z" fill="url(#grsmall)"/><path d="M1652 320.5 C1672 321 1686 345 1685 364 C1684 380 1681 390 1675 395 C1672 370 1664 345 1652 320.5 Z" fill="url(#grhead)"/><path d="M1652 322 C1664 345 1672 370 1675 393" fill="none" stroke="#e6e6e6" stroke-width="1" stroke-dasharray="2.5 2"/><path d="M1603 329 C1617 352 1630 386 1637 420" fill="none" stroke="#e8e8e8" stroke-width="1"/><path d="M1613 329 C1627 352 1639 385 1645 414" fill="none" stroke="#eee" stroke-width="1"/><path d="M1617 330 C1631 352 1642 385 1648 412" fill="none" stroke="#444" stroke-width="1"/><path d="M1596 330 C1610 352 1623 388 1630 422" fill="none" stroke="#c27c36" stroke-width="5"/><path d="M1598 332 C1611 354 1623 388 1629 418" fill="none" stroke="#e0a060" stroke-width="1.2"/><path d="M825.5 563.7 L1456 321.6 C1478 350 1504 410 1509 459.6 L879.5 704.5 Z" fill="url(#gcyl)"/><path d="M825.5 563.7 L1456 321.6" stroke="#5a5a5a" stroke-width="1"/><path d="M1456 321.6 C1478 350 1504 410 1509 459.6" fill="none" stroke="#e8e8e8" stroke-width="1.1" stroke-dasharray="1.6 2.6"/><path d="M825.5 563.7L827.8 566.2L727.1 668.8L726.0 667.0Z" fill="#9b9b9b"/><path d="M826.7 565.0L829.0 567.6L727.7 669.8L726.6 668.0Z" fill="#9d9d9d"/><path d="M827.9 566.4L830.2 569.0L728.3 670.8L727.2 669.0Z" fill="#9f9f9f"/><path d="M829.2 567.8L831.4 570.4L728.8 671.9L727.7 670.0Z" fill="#a0a0a0"/><path d="M830.4 569.2L832.6 571.9L729.4 672.9L728.3 671.0Z" fill="#a2a2a2"/><path d="M831.5 570.6L833.7 573.4L730.0 674.0L728.9 672.0Z" fill="#a4a4a4"/><path d="M832.7 572.1L834.9 574.9L730.6 675.0L729.5 673.0Z" fill="#a6a6a6"/><path d="M833.9 573.6L836.1 576.5L731.2 676.1L730.1 674.1Z" fill="#a8a8a8"/><path d="M835.1 575.1L837.2 578.1L731.7 677.2L730.7 675.2Z" fill="#aaaaaa"/><path d="M836.2 576.7L838.4 579.7L732.3 678.4L731.2 676.3Z" fill="#acacac"/><path d="M837.4 578.3L839.5 581.3L732.9 679.5L731.8 677.4Z" fill="#adadad"/><path d="M838.5 579.9L840.6 583.0L733.5 680.6L732.4 678.5Z" fill="#b0b0b0"/><path d="M839.6 581.6L841.7 584.7L734.0 681.8L733.0 679.6Z" fill="#b2b2b2"/><path d="M840.8 583.2L842.8 586.4L734.6 683.0L733.5 680.8Z" fill="#b4b4b4"/><path d="M841.9 584.9L843.9 588.1L735.2 684.1L734.1 681.9Z" fill="#b6b6b6"/><path d="M843.0 586.6L845.0 589.9L735.8 685.3L734.7 683.1Z" fill="#b8b8b8"/><path d="M844.0 588.4L846.0 591.7L736.3 686.5L735.3 684.3Z" fill="#bbbbbb"/><path d="M845.1 590.2L847.1 593.5L736.9 687.8L735.8 685.5Z" fill="#bdbdbd"/><path d="M846.2 591.9L848.1 595.3L737.5 689.0L736.4 686.7Z" fill="#bfbfbf"/><path d="M847.2 593.8L849.1 597.2L738.0 690.2L737.0 687.9Z" fill="#c1c1c1"/><path d="M848.3 595.6L850.2 599.1L738.6 691.5L737.5 689.1Z" fill="#c4c4c4"/><path d="M849.3 597.4L851.2 600.9L739.1 692.7L738.1 690.4Z" fill="#c6c6c6"/><path d="M850.3 599.3L852.1 602.9L739.7 694.0L738.7 691.6Z" fill="#cacaca"/><path d="M851.3 601.2L853.1 604.8L740.3 695.2L739.2 692.9Z" fill="#cecece"/><path d="M852.3 603.1L854.1 606.7L740.8 696.5L739.8 694.1Z" fill="#d3d3d3"/><path d="M853.3 605.0L855.0 608.7L741.4 697.8L740.3 695.4Z" fill="#d7d7d7"/><path d="M854.2 607.0L856.0 610.7L741.9 699.1L740.9 696.7Z" fill="#dcdcdc"/><path d="M855.2 609.0L856.9 612.7L742.5 700.4L741.4 698.0Z" fill="#e0e0e0"/><path d="M856.1 610.9L857.8 614.7L743.0 701.7L742.0 699.3Z" fill="#e5e5e5"/><path d="M857.0 612.9L858.7 616.7L743.5 703.0L742.5 700.6Z" fill="#e9e9e9"/><path d="M857.9 614.9L859.5 618.7L744.1 704.4L743.1 701.9Z" fill="#eeeeee"/><path d="M858.8 617.0L860.4 620.8L744.6 705.7L743.6 703.2Z" fill="#f3f3f3"/><path d="M859.7 619.0L861.3 622.8L745.1 707.0L744.1 704.5Z" fill="#f8f8f8"/><path d="M860.5 621.1L862.1 624.9L745.7 708.4L744.7 705.9Z" fill="#fdfdfd"/><path d="M861.4 623.1L862.9 627.0L746.2 709.7L745.2 707.2Z" fill="#ffffff"/><path d="M862.2 625.2L863.7 629.1L746.7 711.0L745.7 708.5Z" fill="#ffffff"/><path d="M863.0 627.3L864.5 631.2L747.2 712.4L746.2 709.9Z" fill="#ffffff"/><path d="M863.8 629.4L865.2 633.3L747.7 713.7L746.8 711.2Z" fill="#ffffff"/><path d="M864.6 631.5L866.0 635.4L748.2 715.1L747.3 712.6Z" fill="#ffffff"/><path d="M865.3 633.6L866.7 637.6L748.7 716.5L747.8 713.9Z" fill="#ffffff"/><path d="M866.1 635.7L867.4 639.7L749.2 717.8L748.3 715.3Z" fill="#ffffff"/><path d="M866.8 637.9L868.1 641.8L749.7 719.2L748.8 716.6Z" fill="#ffffff"/><path d="M867.5 640.0L868.8 644.0L750.2 720.5L749.3 718.0Z" fill="#ffffff"/><path d="M868.2 642.1L869.4 646.2L750.7 721.9L749.8 719.4Z" fill="#fcfcfc"/><path d="M868.9 644.3L870.1 648.3L751.2 723.3L750.3 720.7Z" fill="#f1f1f1"/><path d="M869.5 646.5L870.7 650.5L751.7 724.6L750.8 722.1Z" fill="#e7e7e7"/><path d="M870.2 648.6L871.3 652.7L752.2 726.0L751.3 723.5Z" fill="#dddddd"/><path d="M870.8 650.8L871.9 654.8L752.6 727.4L751.7 724.8Z" fill="#d2d2d2"/><path d="M871.4 653.0L872.5 657.0L753.1 728.7L752.2 726.2Z" fill="#cacaca"/><path d="M872.0 655.1L873.0 659.2L753.6 730.1L752.7 727.6Z" fill="#c2c2c2"/><path d="M872.5 657.3L873.5 661.4L754.0 731.5L753.2 728.9Z" fill="#b9b9b9"/><path d="M873.1 659.5L874.0 663.5L754.5 732.8L753.6 730.3Z" fill="#b1b1b1"/><path d="M873.6 661.7L874.5 665.7L754.9 734.2L754.1 731.6Z" fill="#a9a9a9"/><path d="M874.1 663.8L875.0 667.9L755.3 735.5L754.5 733.0Z" fill="#a1a1a1"/><path d="M874.6 666.0L875.4 670.1L755.8 736.9L755.0 734.4Z" fill="#9c9c9c"/><path d="M875.0 668.2L875.8 672.3L756.2 738.2L755.4 735.7Z" fill="#979797"/><path d="M875.5 670.4L876.2 674.4L756.6 739.6L755.8 737.1Z" fill="#939393"/><path d="M875.9 672.5L876.6 676.6L757.1 740.9L756.3 738.4Z" fill="#8e8e8e"/><path d="M876.3 674.7L877.0 678.8L757.5 742.3L756.7 739.8Z" fill="#898989"/><path d="M876.7 676.9L877.3 680.9L757.9 743.6L757.1 741.1Z" fill="#848484"/><path d="M877.0 679.1L877.6 683.1L758.3 744.9L757.5 742.4Z" fill="#7f7f7f"/><path d="M877.4 681.2L877.9 685.2L758.7 746.2L757.9 743.8Z" fill="#7a7a7a"/><path d="M877.7 683.4L878.2 687.4L759.1 747.6L758.3 745.1Z" fill="#757575"/><path d="M878.0 685.5L878.4 689.5L759.5 748.9L758.7 746.4Z" fill="#707070"/><path d="M878.2 687.7L878.7 691.6L759.8 750.2L759.1 747.7Z" fill="#6b6b6b"/><path d="M878.5 689.8L878.9 693.8L760.2 751.5L759.5 749.0Z" fill="#666666"/><path d="M878.7 691.9L879.0 695.9L760.6 752.8L759.9 750.3Z" fill="#616161"/><path d="M878.9 694.0L879.2 698.0L760.9 754.0L760.2 751.6Z" fill="#5c5c5c"/><path d="M879.1 696.2L879.3 700.1L761.3 755.3L760.6 752.9Z" fill="#585858"/><path d="M879.2 698.3L879.4 702.1L761.6 756.6L761.0 754.2Z" fill="#525252"/><path d="M879.3 700.4L879.5 704.2L762.0 757.8L761.3 755.5Z" fill="#4e4e4e"/><path d="M879.4 702.4L879.5 704.5L762.0 758.0L761.7 756.7Z" fill="#484848"/><path d="M825.5 563.7 C855 595 878 655 879.5 704.5" fill="none" stroke="#f0f0f0" stroke-width="1.1" stroke-dasharray="1.6 2.6"/><path d="M669.4 697.5 L715 672 C730 695 745 730 751 760 L700.2 772.5 C694 748 682 720 669.4 697.5 Z" fill="url(#gsmall)"/><path d="M715 672 L726 666 C740 690 755 728 762 758 L751 760 C745 730 730 695 715 672 Z" fill="url(#gring)"/><path d="M669.4 697.5 C662 703 658.5 710 658.9 716.2 C659 724 659.5 738 665.4 747 C669 755 678 766 685.7 771.3 C690 773 695 773.5 700.2 772.5 C694 748 682 720 669.4 697.5 Z" fill="url(#ghead)"/><path d="M669.4 697.5 C682 720 694 748 700.2 772" fill="none" stroke="#ddd" stroke-width="1" stroke-dasharray="2.5 2"/><path d="M715 673 C730 696 745 731 751 761" fill="none" stroke="#1a1a1a" stroke-width="1.2" stroke-dasharray="2 1.5"/><path d="M719 671 C734 694 748 729 754 759" fill="none" stroke="#fafafa" stroke-width="1"/><path d="M725.5 666 C740 690 754 728 761 758" fill="none" stroke="#c27c36" stroke-width="4.5"/><path d="M887.8 653.4 L910.6 644.5 L934.5 718.4 L900.6 731.2 L889 701 L895 696 Z" fill="#720000" stroke="#6a0000" stroke-width="1"/><path d="M893 660 L910 652 L931 716 L913 723 Z" fill="url(#gsad)"/><path d="M889.5 701 L899 697 L913 723 L901 730 Z" fill="#7e0a0a"/><path d="M895 696 L899 697 L896 676 Z" fill="#480000"/><path d="M1462.3 431.8 L1486.3 422.9 L1509 497.6 L1476 507.7 L1464.8 477.3 L1471 470 Z" fill="#720000" stroke="#6a0000" stroke-width="1"/><path d="M1468 435 L1486 431 L1507 497 L1489 503 Z" fill="url(#gsad2)"/><path d="M1465 478 L1475 474 L1489 503 L1477 507 Z" fill="#7e0a0a"/><path d="M1471 470 L1475 474 L1473 452 Z" fill="#480000"/><text x="1355" y="339" font-size="14.5" fill="#1414f5" letter-spacing="0.9">N3 INLET</text><text x="1178" y="409" font-size="14.5" fill="#1414f5" letter-spacing="0.9">N2 INLET</text><text x="966" y="489" font-size="14.5" fill="#1414f5" letter-spacing="0.9">N1 INLET</text><text x="685" y="675" font-size="14.5" fill="#1414f5" letter-spacing="0.9">INLET</text><text x="729" y="790" font-size="14.5" fill="#1414f5" letter-spacing="0.9">OUTLET</text><text x="1038" y="671" font-size="14.5" fill="#1414f5" letter-spacing="0.9">N1 OUTLET</text><text x="1249" y="598" font-size="14.5" fill="#1414f5" letter-spacing="0.9">N5 OUTLET</text><text x="1426" y="528" font-size="14.5" fill="#1414f5" letter-spacing="0.9">Noz N6 Fr50</text><text x="1157" y="444" font-size="14.5" fill="#00e0f0" letter-spacing="1.5">SU</text><line x1="1141" y1="442" x2="1153" y2="440" stroke="#00e0f0" stroke-width="1.5"/><g transform="translate(689 681) rotate(-21) scale(0.85)"><ellipse cx="0" cy="10.5" rx="22" ry="2.6" fill="#10d010" stroke="#005a00" stroke-width="0.7"/><path d="M-16 11.8 A22 2.4 0 0 0 8 12.6" fill="none" stroke="#b0ffb0" stroke-width="1.3" opacity="0.9"/><path d="M-12.5 -9.0 C-15 -3 -15 5 -12 10.5 L12 10.5 C15 5 15 -3 12.5 -9.0 Z" fill="url(#gnz)"/><ellipse cx="0" cy="-9.5" rx="18.5" ry="2.5" fill="#0ab40a" stroke="#004a00" stroke-width="0.7"/><ellipse cx="0" cy="-9.5" rx="18.5" ry="2.5" fill="none" stroke="#001a00" stroke-width="1.5" stroke-dasharray="1.3 5.5"/></g><g transform="translate(724 773) rotate(-21) scale(0.85 -0.85)"><ellipse cx="0" cy="10.5" rx="22" ry="2.6" fill="#10d010" stroke="#005a00" stroke-width="0.7"/><path d="M-16 11.8 A22 2.4 0 0 0 8 12.6" fill="none" stroke="#b0ffb0" stroke-width="1.3" opacity="0.9"/><path d="M-12.5 -11.5 C-15 -3 -15 5 -12 10.5 L12 10.5 C15 5 15 -3 12.5 -11.5 Z" fill="url(#gnz)"/><ellipse cx="0" cy="-12" rx="18.5" ry="2.5" fill="#0ab40a" stroke="#004a00" stroke-width="0.7"/><ellipse cx="0" cy="-12" rx="18.5" ry="2.5" fill="none" stroke="#001a00" stroke-width="1.5" stroke-dasharray="1.3 5.5"/></g><g transform="translate(972 496) rotate(-21) scale(1)"><ellipse cx="0" cy="10.5" rx="22" ry="2.6" fill="#10d010" stroke="#005a00" stroke-width="0.7"/><path d="M-16 11.8 A22 2.4 0 0 0 8 12.6" fill="none" stroke="#b0ffb0" stroke-width="1.3" opacity="0.9"/><path d="M-12.5 -9.0 C-15 -3 -15 5 -12 10.5 L12 10.5 C15 5 15 -3 12.5 -9.0 Z" fill="url(#gnz)"/><ellipse cx="0" cy="-9.5" rx="18.5" ry="2.5" fill="#0ab40a" stroke="#004a00" stroke-width="0.7"/><ellipse cx="0" cy="-9.5" rx="18.5" ry="2.5" fill="none" stroke="#001a00" stroke-width="1.5" stroke-dasharray="1.3 5.5"/></g><g transform="translate(1180 416) rotate(-21) scale(1)"><ellipse cx="0" cy="10.5" rx="22" ry="2.6" fill="#10d010" stroke="#005a00" stroke-width="0.7"/><path d="M-16 11.8 A22 2.4 0 0 0 8 12.6" fill="none" stroke="#b0ffb0" stroke-width="1.3" opacity="0.9"/><path d="M-12.5 -9.0 C-15 -3 -15 5 -12 10.5 L12 10.5 C15 5 15 -3 12.5 -9.0 Z" fill="url(#gnz)"/><ellipse cx="0" cy="-9.5" rx="18.5" ry="2.5" fill="#0ab40a" stroke="#004a00" stroke-width="0.7"/><ellipse cx="0" cy="-9.5" rx="18.5" ry="2.5" fill="none" stroke="#001a00" stroke-width="1.5" stroke-dasharray="1.3 5.5"/></g><g transform="translate(1360 345) rotate(-21) scale(1)"><ellipse cx="0" cy="10.5" rx="22" ry="2.6" fill="#10d010" stroke="#005a00" stroke-width="0.7"/><path d="M-16 11.8 A22 2.4 0 0 0 8 12.6" fill="none" stroke="#b0ffb0" stroke-width="1.3" opacity="0.9"/><path d="M-12.5 -9.0 C-15 -3 -15 5 -12 10.5 L12 10.5 C15 5 15 -3 12.5 -9.0 Z" fill="url(#gnz)"/><ellipse cx="0" cy="-9.5" rx="18.5" ry="2.5" fill="#0ab40a" stroke="#004a00" stroke-width="0.7"/><ellipse cx="0" cy="-9.5" rx="18.5" ry="2.5" fill="none" stroke="#001a00" stroke-width="1.5" stroke-dasharray="1.3 5.5"/></g><g transform="translate(1031 657) rotate(-21) scale(1 -1)"><ellipse cx="0" cy="10.5" rx="22" ry="2.6" fill="#10d010" stroke="#005a00" stroke-width="0.7"/><path d="M-16 11.8 A22 2.4 0 0 0 8 12.6" fill="none" stroke="#b0ffb0" stroke-width="1.3" opacity="0.9"/><path d="M-12.5 -11.5 C-15 -3 -15 5 -12 10.5 L12 10.5 C15 5 15 -3 12.5 -11.5 Z" fill="url(#gnz)"/><ellipse cx="0" cy="-12" rx="18.5" ry="2.5" fill="#0ab40a" stroke="#004a00" stroke-width="0.7"/><ellipse cx="0" cy="-12" rx="18.5" ry="2.5" fill="none" stroke="#001a00" stroke-width="1.5" stroke-dasharray="1.3 5.5"/></g><g transform="translate(1241 578) rotate(-21) scale(1 -1)"><ellipse cx="0" cy="10.5" rx="22" ry="2.6" fill="#10d010" stroke="#005a00" stroke-width="0.7"/><path d="M-16 11.8 A22 2.4 0 0 0 8 12.6" fill="none" stroke="#b0ffb0" stroke-width="1.3" opacity="0.9"/><path d="M-12.5 -11.5 C-15 -3 -15 5 -12 10.5 L12 10.5 C15 5 15 -3 12.5 -11.5 Z" fill="url(#gnz)"/><ellipse cx="0" cy="-12" rx="18.5" ry="2.5" fill="#0ab40a" stroke="#004a00" stroke-width="0.7"/><ellipse cx="0" cy="-12" rx="18.5" ry="2.5" fill="none" stroke="#001a00" stroke-width="1.5" stroke-dasharray="1.3 5.5"/></g><g transform="translate(1420 509) rotate(-21) scale(1 -1)"><ellipse cx="0" cy="10.5" rx="22" ry="2.6" fill="#10d010" stroke="#005a00" stroke-width="0.7"/><path d="M-16 11.8 A22 2.4 0 0 0 8 12.6" fill="none" stroke="#b0ffb0" stroke-width="1.3" opacity="0.9"/><path d="M-12.5 -11.5 C-15 -3 -15 5 -12 10.5 L12 10.5 C15 5 15 -3 12.5 -11.5 Z" fill="url(#gnz)"/><ellipse cx="0" cy="-12" rx="18.5" ry="2.5" fill="#0ab40a" stroke="#004a00" stroke-width="0.7"/><ellipse cx="0" cy="-12" rx="18.5" ry="2.5" fill="none" stroke="#001a00" stroke-width="1.5" stroke-dasharray="1.3 5.5"/></g><text x="1541" y="211" font-size="14.3" fill="#ff1e1e" letter-spacing="0.8" stroke="#ff1e1e" stroke-width="0.3" xml:space="preserve">16325.45 mm  [90]</text><text x="1495" y="228" font-size="14.3" fill="#ff1e1e" letter-spacing="0.8" stroke="#ff1e1e" stroke-width="0.3" xml:space="preserve">15544.73 mm  [70]</text><text x="1658" y="517" font-size="14.3" fill="#ff1e1e" letter-spacing="0.8" stroke="#ff1e1e" stroke-width="0.3" xml:space="preserve">16361.45 mm  [100]</text><text x="1630" y="530" font-size="14.3" fill="#ff1e1e" letter-spacing="0.8" stroke="#ff1e1e" stroke-width="0.3" xml:space="preserve">15825.45 mm  [80]</text><text x="1492" y="582" font-size="14.3" fill="#ff1e1e" letter-spacing="0.8" stroke="#ff1e1e" stroke-width="0.3" xml:space="preserve">13544.73 mm  [60]</text><text x="751" y="517" font-size="14.3" fill="#ff1e1e" letter-spacing="0.8" stroke="#ff1e1e" stroke-width="0.3" xml:space="preserve">3034.73 mm  [50]</text><text x="618" y="570" font-size="14.3" fill="#ff1e1e" letter-spacing="0.8" stroke="#ff1e1e" stroke-width="0.3" xml:space="preserve">750.00 mm  [30]</text><text x="585" y="587" font-size="14.3" fill="#ff1e1e" letter-spacing="0.8" stroke="#ff1e1e" stroke-width="0.3" xml:space="preserve">0.00 mm  [10]</text><text x="751" y="871" font-size="14.3" fill="#ff1e1e" letter-spacing="0.8" stroke="#ff1e1e" stroke-width="0.3" xml:space="preserve">1034.73 mm  [40]</text><text x="699" y="893" font-size="14.3" fill="#ff1e1e" letter-spacing="0.8" stroke="#ff1e1e" stroke-width="0.3" xml:space="preserve">50.00 mm  [20]</text><text x="707" y="734" font-size="14.3" fill="#ff1e1e" letter-spacing="0.8" stroke="#ff1e1e" stroke-width="0.3" xml:space="preserve">Datum Line</text><line x1="688" y1="736" x2="703" y2="729" stroke="#ff1e1e" stroke-width="1.3"/><path d="M594 834 L569 806 A36 36 0 0 1 624 815 Z" fill="#767676"/><path d="M594 834 L582 818 A18 18 0 0 1 606 822 Z" fill="#444"/><line x1="588" y1="830" x2="574" y2="799" stroke="#10c010" stroke-width="5"/><path d="M568 801 L574 792 L581 798 Z" fill="#0a9a0a"/><line x1="600" y1="831" x2="626" y2="821" stroke="#1010ee" stroke-width="5"/><path d="M622 814 L633 820 L625 828 Z" fill="#0a0aa0"/><circle cx="594" cy="834" r="7.3" fill="url(#gball)"/><path d="M594 819 L601 819 L595 832 L601 832" fill="none" stroke="#f00" stroke-width="1"/><text x="565" y="786" font-size="14" fill="#10d010">Y</text><text x="635" y="817" font-size="14" fill="#1414f0">X</text></svg><div class="a" style="left:1887px;top:148px;width:1px;height:805px;background:#f8f8fa"></div>
<div class="a" style="left:1893px;top:152px;width:20px;height:4px;background-image:repeating-linear-gradient(90deg,#9a9aa0 0 1px,transparent 1px 2.5px)"></div>
<svg class="ic" style="left:1895px;top:165.0px" width="18" height="18" viewBox="0 0 18 18"><path d="M2 6 L12 6 L12 16 L2 16 Z" fill="#5d7089"/><path d="M2 6 L6 2 L16 2 L16 12 L12 16 L2 16 Z" fill="none" stroke="#3e546e" stroke-width="1.6" stroke-linejoin="round"/><path d="M2 6 L12 6 L16 2 M12 6 L12 16" fill="none" stroke="#3e546e" stroke-width="1.2"/></svg>
<svg class="ic" style="left:1895px;top:192.5px" width="18" height="18" viewBox="0 0 18 18"><path d="M6 2 L16 2 L16 12 L6 12 Z" fill="#5d7089"/><path d="M6 2 L6 12 L2 16 M6 12 L16 12" fill="none" stroke="#3e546e" stroke-width="1"/><path d="M2 6 L6 2 L16 2 L16 12 L12 16 L2 16 Z" fill="none" stroke="#3e546e" stroke-width="1.6" stroke-linejoin="round"/><path d="M2 6 L12 6 L16 2 M12 6 L12 16" fill="none" stroke="#3e546e" stroke-width="1.2"/></svg>
<svg class="ic" style="left:1895px;top:220.5px" width="18" height="18" viewBox="0 0 18 18"><path d="M6 2 L16 2 L12 6 L2 6 Z" fill="#5d7089"/><path d="M6 2 L6 12 L2 16 M6 12 L16 12" fill="none" stroke="#3e546e" stroke-width="1"/><path d="M2 6 L6 2 L16 2 L16 12 L12 16 L2 16 Z" fill="none" stroke="#3e546e" stroke-width="1.6" stroke-linejoin="round"/><path d="M2 6 L12 6 L16 2 M12 6 L12 16" fill="none" stroke="#3e546e" stroke-width="1.2"/></svg>
<svg class="ic" style="left:1895px;top:248.0px" width="18" height="18" viewBox="0 0 18 18"><path d="M2 16 L6 12 L16 12 L12 16 Z" fill="#5d7089"/><path d="M6 2 L6 12 L2 16 M6 12 L16 12" fill="none" stroke="#3e546e" stroke-width="1"/><path d="M2 6 L6 2 L16 2 L16 12 L12 16 L2 16 Z" fill="none" stroke="#3e546e" stroke-width="1.6" stroke-linejoin="round"/><path d="M2 6 L12 6 L16 2 M12 6 L12 16" fill="none" stroke="#3e546e" stroke-width="1.2"/></svg>
<svg class="ic" style="left:1895px;top:275.3px" width="18" height="18" viewBox="0 0 18 18"><path d="M2 6 L6 2 L6 12 L2 16 Z" fill="#5d7089"/><path d="M6 2 L6 12 L2 16 M6 12 L16 12" fill="none" stroke="#3e546e" stroke-width="1"/><path d="M2 6 L6 2 L16 2 L16 12 L12 16 L2 16 Z" fill="none" stroke="#3e546e" stroke-width="1.6" stroke-linejoin="round"/><path d="M2 6 L12 6 L16 2 M12 6 L12 16" fill="none" stroke="#3e546e" stroke-width="1.2"/></svg>
<svg class="ic" style="left:1895px;top:303.0px" width="18" height="18" viewBox="0 0 18 18"><path d="M12 6 L16 2 L16 12 L12 16 Z" fill="#5d7089"/><path d="M6 2 L6 12 L2 16 M6 12 L16 12" fill="none" stroke="#3e546e" stroke-width="1"/><path d="M2 6 L6 2 L16 2 L16 12 L12 16 L2 16 Z" fill="none" stroke="#3e546e" stroke-width="1.6" stroke-linejoin="round"/><path d="M2 6 L12 6 L16 2 M12 6 L12 16" fill="none" stroke="#3e546e" stroke-width="1.2"/></svg>
<svg class="ic" style="left:1895px;top:329.2px" width="18" height="18" viewBox="0 0 18 18"><path d="M2 7 L9 11 L9 17 L2 11 Z" fill="#5d7089"/><path d="M9 1 L16 7 L16 11 L9 17 L2 11 L2 7 Z" fill="none" stroke="#3e546e" stroke-width="1.6" stroke-linejoin="round"/><path d="M2 7 L9 11 L16 7 M9 11 L9 17" fill="none" stroke="#3e546e" stroke-width="1"/></svg>
<svg class="ic" style="left:1895px;top:357.4px" width="18" height="18" viewBox="0 0 18 18"><path d="M9 11 L16 7 L16 11 L9 17 Z" fill="#5d7089"/><path d="M9 1 L16 7 L16 11 L9 17 L2 11 L2 7 Z" fill="none" stroke="#3e546e" stroke-width="1.6" stroke-linejoin="round"/><path d="M2 7 L9 11 L16 7 M9 11 L9 17" fill="none" stroke="#3e546e" stroke-width="1"/></svg>
<svg class="ic" style="left:1895px;top:384.8px" width="18" height="18" viewBox="0 0 18 18"><path d="M9 1 L16 7 L9 11 L2 7 Z" fill="#5d7089"/><path d="M9 1 L16 7 L16 11 L9 17 L2 11 L2 7 Z" fill="none" stroke="#3e546e" stroke-width="1.6" stroke-linejoin="round"/><path d="M2 7 L9 11 L16 7 M9 11 L9 17" fill="none" stroke="#3e546e" stroke-width="1"/></svg>
<svg class="ic" style="left:1895px;top:412.0px" width="18" height="18" viewBox="0 0 18 18"><path d="M9 1 L16 7 L9 11 L2 7 Z" fill="#5d7089"/><path d="M2 7 L9 11 L9 17 L2 11 Z" fill="#7a8aa0"/><path d="M9 1 L16 7 L16 11 L9 17 L2 11 L2 7 Z" fill="none" stroke="#3e546e" stroke-width="1.6" stroke-linejoin="round"/><path d="M2 7 L9 11 L16 7 M9 11 L9 17" fill="none" stroke="#3e546e" stroke-width="1"/></svg>
<svg class="ic" style="left:1895px;top:440.3px" width="18" height="18" viewBox="0 0 18 18"><circle cx="9" cy="6" r="4.5" fill="#e8eef4" stroke="#3e546e" stroke-width="1.6"/><line x1="12" y1="9" x2="17" y2="15" stroke="#3e546e" stroke-width="2.4"/><path d="M1 13 L7 13 M4 10 L4 16" stroke="#3e546e" stroke-width="1.2"/></svg>
<svg class="ic" style="left:1895px;top:467.6px" width="18" height="18" viewBox="0 0 18 18"><circle cx="9" cy="6" r="4.5" fill="#e8eef4" stroke="#3e546e" stroke-width="1.6"/><line x1="12" y1="9" x2="17" y2="15" stroke="#3e546e" stroke-width="2.4"/><rect x="1" y="11" width="5" height="5" fill="#fff" stroke="#3e546e" stroke-width="1.2"/></svg>
<div class="a" style="left:1890px;top:493px;width:27px;height:1px;background:#d2d2d8"></div>
<div class="a" style="left:1890px;top:610px;width:27px;height:1px;background:#d2d2d8"></div>
<div class="a" style="left:1890px;top:701px;width:27px;height:1px;background:#d2d2d8"></div>
<div class="a" style="left:1890px;top:498px;width:27px;height:28px;border:1px solid #3f8ee8;background:#f4f6fa"></div>
<svg class="ic" style="left:1895px;top:502.0px" width="18" height="18" viewBox="0 0 18 18"><path d="M3 9 A6 6 0 0 1 14 5" fill="none" stroke="#3e546e" stroke-width="2.6"/><path d="M15 9 A6 6 0 0 1 4 13" fill="none" stroke="#3e546e" stroke-width="2.6"/><path d="M12 2 L17 6 L11 8 Z M6 16 L1 12 L7 10 Z" fill="#3e546e"/></svg>
<svg class="ic" style="left:1895px;top:529.3px" width="18" height="18" viewBox="0 0 18 18"><ellipse cx="9" cy="9" rx="7" ry="4.5" fill="none" stroke="#2a5bc8" stroke-width="2.6"/><rect x="7.5" y="1" width="3" height="16" fill="#20b020"/><path d="M14 11 L18 9 L17 13Z" fill="#2a5bc8"/></svg>
<svg class="ic" style="left:1895px;top:556.6px" width="18" height="18" viewBox="0 0 18 18"><path d="M2 6 C4 3 8 4 12 7 L15 13 L9 16 C6 14 3 10 2 6 Z" fill="#c9877a"/><path d="M10 12 L16 10 L17 16 L11 17 Z" fill="#2f5a98"/><path d="M14 1 L14 8 M11 4 L17 4" stroke="#2f4a6e" stroke-width="1.4"/></svg>
<svg class="ic" style="left:1895px;top:585.7px" width="18" height="18" viewBox="0 0 18 18"><rect x="1" y="4" width="7" height="2.5" fill="#3e546e"/><rect x="7" y="10" width="10" height="2.5" fill="#3e546e"/><rect x="10.7" y="6" width="2.5" height="10" fill="#3e546e"/></svg>
<svg class="ic" style="left:1895px;top:618.5px" width="18" height="18" viewBox="0 0 18 18"><rect x="1.5" y="1.5" width="14" height="14" fill="none" stroke="#3e546e" stroke-width="1.2" stroke-dasharray="1.5 1.5"/><path d="M6 3 L16 12 L11 12 L14 17 L12 18 L9 13 L6 16 Z" fill="#3e546e"/></svg>
<svg class="ic" style="left:1895px;top:645.8px" width="18" height="18" viewBox="0 0 18 18"><path d="M5 2 L15 11 L10 11 L13 16 L11 17 L8 12 L5 15 Z" fill="#3e546e"/></svg>
<svg class="ic" style="left:1895px;top:673.8px" width="18" height="18" viewBox="0 0 18 18"><rect x="4" y="5" width="10" height="9" fill="#1a8a8a"/><rect x="6" y="7" width="6" height="5" fill="#dfe"/><path d="M2 17 L2 2 M2 17 L17 17 M2 17 L16 3" stroke="#e01010" stroke-width="1.2"/><path d="M2 17 L17 17" stroke="#10a010" stroke-width="1.4"/><path d="M14 4 L17 1" stroke="#2020e0" stroke-width="1.4"/></svg>
<svg class="ic" style="left:1895px;top:708.4px" width="18" height="18" viewBox="0 0 18 18"><path d="M2 9 L6 5 L16 5 L16 11 L12 15 L2 15 Z" fill="#fff" stroke="#3e546e" stroke-width="1.4"/><line x1="4" y1="17" x2="15" y2="1" stroke="#e01818" stroke-width="2.4"/></svg>
<svg class="ic" style="left:1895px;top:736.6px" width="18" height="18" viewBox="0 0 18 18"><ellipse cx="9" cy="3.5" rx="6" ry="2.5" fill="none" stroke="#b0bac6" stroke-width="1.2"/><path d="M3 3.5 L3 14 A6 2.5 0 0 0 15 14 L15 3.5" fill="none" stroke="#b0bac6" stroke-width="1.2"/><circle cx="8" cy="9" r="2" fill="none" stroke="#b0bac6"/></svg>
<svg class="ic" style="left:1895px;top:764.8px" width="18" height="18" viewBox="0 0 18 18"><rect x="3" y="1" width="3" height="16" fill="#6a7a90" stroke="#3e546e" stroke-width="0.8"/><rect x="6" y="4" width="10" height="10" fill="#dde2ea" stroke="#3e546e" stroke-width="0.8"/><line x1="6" y1="9" x2="16" y2="9" stroke="#d01818" stroke-width="1.4"/></svg>
<svg class="ic" style="left:1895px;top:793.0px" width="18" height="18" viewBox="0 0 18 18"><path d="M12 3 C4 3 3 11 8 13 L13 14" fill="none" stroke="#1a1a1a" stroke-width="2"/><path d="M12 10 L17 14 L12 17 Z" fill="#1a1a1a"/></svg>
<svg class="ic" style="left:1898px;top:814.0px" width="18" height="18" viewBox="0 0 18 18"><path d="M6 4 L12 9 L6 14 Z" fill="#1a3a6a"/><path d="M6 4 L6 14" stroke="#c08020" stroke-width="1"/></svg>
</body></html>
